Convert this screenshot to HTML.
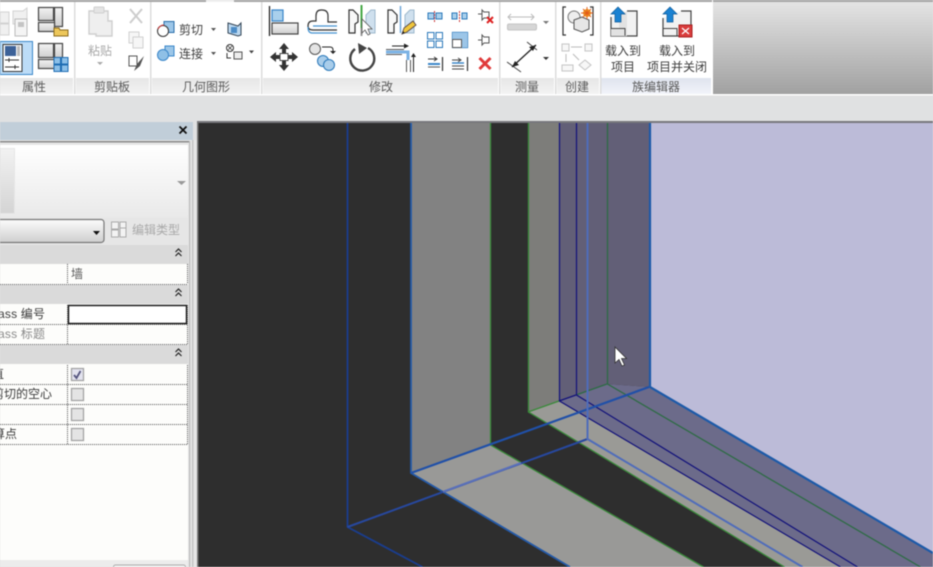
<!DOCTYPE html>
<html lang="zh"><head><meta charset="utf-8"><title>Revit</title>
<style>
html,body{margin:0;padding:0;width:933px;height:567px;overflow:hidden;background:#e0e1e2}
svg{display:block;filter:blur(.45px)}
text{font-family:"Liberation Sans","Noto Sans CJK SC",sans-serif;font-size:12px;fill:#3c3c3c}
.c{text-anchor:middle}
.g{fill:#5a5a5a}
.f{fill:#a9a9a9}
</style></head><body>
<svg width="933" height="567" viewBox="0 0 933 567" xmlns="http://www.w3.org/2000/svg">
<defs>
<linearGradient id="rg" x1="0" y1="0" x2="0" y2="1"><stop offset="0" stop-color="#e4e4e4"/><stop offset="1" stop-color="#a0a0a0"/></linearGradient>
<linearGradient id="lb" x1="0" y1="0" x2="0" y2="1"><stop offset="0" stop-color="#e6e6e6"/><stop offset="1" stop-color="#f3f3f3"/></linearGradient>
<linearGradient id="lb2" x1="0" y1="0" x2="0" y2="1"><stop offset="0" stop-color="#dfe4ee"/><stop offset="1" stop-color="#f2f4fa"/></linearGradient>
<linearGradient id="ts" x1="0" y1="0" x2="0" y2="1"><stop offset="0" stop-color="#fff"/><stop offset="1" stop-color="#e9e9e9"/></linearGradient>
<linearGradient id="dd" x1="0" y1="0" x2="0" y2="1"><stop offset="0" stop-color="#fbfbfb"/><stop offset="1" stop-color="#cfcfcf"/></linearGradient>
<linearGradient id="pv" x1="0" y1="0" x2="0" y2="1"><stop offset="0" stop-color="#f2f2f2"/><stop offset="1" stop-color="#d4d4d4"/></linearGradient>
<linearGradient id="ic" x1="0" y1="0" x2="0" y2="1"><stop offset="0" stop-color="#f4f4f4"/><stop offset="1" stop-color="#cfcfcf"/></linearGradient>
</defs>

<!-- base -->
<rect width="933" height="567" fill="#e0e1e2"/>
<!-- ribbon -->
<rect x="0" y="0" width="712" height="95" fill="#fff"/>
<rect x="712" y="2" width="221" height="93" fill="url(#rg)"/>
<rect x="0" y="0" width="933" height="2" fill="#a5a5a5"/>
<rect x="206" y="0" width="28" height="2" fill="#f0f0f0"/>
<rect x="712" y="0" width="1" height="95" fill="#fff"/>
<rect x="0" y="94" width="933" height="1.5" fill="#fff"/>
<!-- group label bands -->
<g fill="url(#lb)">
<rect x="0" y="78" width="73" height="16"/><rect x="76" y="78" width="73" height="16"/><rect x="152" y="78" width="108" height="16"/><rect x="263" y="78" width="235" height="16"/><rect x="501" y="78" width="53" height="16"/><rect x="557" y="78" width="42" height="16"/>
</g>
<rect x="601" y="78" width="110" height="16" fill="url(#lb2)"/>
<g fill="#dcdcdc">
<rect x="74" y="2" width="1.5" height="92"/><rect x="150" y="2" width="1.5" height="92"/><rect x="261" y="2" width="1.5" height="92"/><rect x="499" y="2" width="1.5" height="92"/><rect x="555" y="2" width="1.5" height="92"/><rect x="600" y="2" width="1.5" height="92"/>
</g>
<g class="lab">
<text class="c g" x="34" y="91">属性</text>
<text class="c g" x="112" y="91">剪贴板</text>
<text class="c g" x="206" y="91">几何图形</text>
<text class="c g" x="381" y="91">修改</text>
<text class="c g" x="527" y="91">测量</text>
<text class="c g" x="577" y="91">创建</text>
<text class="c g" x="656" y="91">族编辑器</text>
</g>

<!-- cubes (faded) -->
<g fill="#f0f0f0" stroke="#d2d2d2">
<path d="M0 12h9v11H0z M0 24h9v11H0z"/>
<path d="M13 11h10l4 -3v13l-4 3H13z"/>
<rect x="15" y="19" width="12" height="17" fill="#f4f4f4" stroke="#bbb"/>
</g>
<rect x="18" y="22" width="6" height="5" fill="#c4c4c4"/>
<!-- type props -->
<g stroke="#444" stroke-width="1.2" fill="url(#ic)">
<rect x="38.5" y="7.5" width="15" height="13"/>
<rect x="54.5" y="7.5" width="8" height="19"/>
<rect x="38.5" y="22.5" width="16" height="9"/>
</g>
<path d="M54 28h5l1 2h8v6H54z" fill="#edc75a" stroke="#8b6a1c"/>
<!-- properties button -->
<rect x="0" y="41.5" width="32.5" height="33" fill="#bcdcf7" stroke="#3b87c9"/>
<rect x="3" y="44.5" width="19" height="27" fill="#fff" stroke="#333"/>
<rect x="5" y="46" width="11" height="10" fill="#3c6198"/>
<rect x="17" y="46" width="3" height="10" fill="#bbb"/>
<path d="M5 60h14M5 67h14M9 58v4M15 65v4" stroke="#333" fill="none"/>
<!-- family types -->
<g stroke="#444" stroke-width="1.2" fill="url(#ic)">
<rect x="38.5" y="43.5" width="15" height="14"/>
<rect x="54.5" y="43.5" width="8" height="14"/>
<rect x="38.5" y="59.5" width="16" height="9"/>
</g>
<g fill="#8cc0e8" stroke="#1f6db3">
<rect x="54" y="57.5" width="6.5" height="6.5"/><rect x="61.5" y="57.5" width="6.5" height="6.5"/><rect x="54" y="65" width="6.5" height="6.5"/><rect x="61.5" y="65" width="6.5" height="6.5"/>
</g>

<!-- clipboard (faded) -->
<path d="M89 11h19v10h4v15H96v-2h-7z" fill="#efefef" stroke="#cfcfcf" stroke-width="1.4"/>
<rect x="94" y="7" width="10" height="6" rx="1" fill="#e4e4e4" stroke="#cfcfcf"/>
<text class="c f" x="100" y="55">粘贴</text>
<path d="M97 62h6l-3 3z" fill="#a9a9a9"/>
<path d="M130 9l12 14M142 9l-12 14" stroke="#cdcdcd" stroke-width="2"/>
<rect x="129" y="32" width="10" height="11" fill="#f6f6f6" stroke="#d0d0d0"/>
<rect x="133" y="37" width="10" height="11" fill="#f6f6f6" stroke="#d0d0d0"/>
<rect x="129" y="56" width="8" height="10" fill="#fff" stroke="#555"/>
<path d="M134 71l3-7 7-8-4 10z" fill="#555"/>

<!-- geometry -->
<rect x="164" y="21.5" width="10" height="11" fill="#9cc6e8" stroke="#2a6eaa"/>
<circle cx="163" cy="31" r="5.5" fill="#fff" stroke="#333"/>
<path d="M158 29q2-4 6-4" stroke="#c33" fill="none"/>
<text x="179" y="34">剪切</text>
<path d="M211 28h5l-2.500 3z" fill="#555"/>
<path d="M228 23l10 3 3-3v12l-3 1-10-3z" fill="#bcd8f0" stroke="#345"/>
<rect x="231" y="27" width="6" height="6" fill="#4d8cc6"/>
<rect x="165" y="46" width="9" height="10" fill="#9cc6e8" stroke="#3a86c9"/>
<circle cx="163" cy="55" r="5.500" fill="#8fc0e6" stroke="#3a86c9"/>
<text x="179" y="58">连接</text>
<path d="M211 52h5l-2.500 3z" fill="#555"/>
<circle cx="230" cy="48" r="3.500" fill="#fff" stroke="#333"/>
<path d="M228 46l4 4M232 46l-4 4" stroke="#333" stroke-width=".8"/>
<path d="M227 53v5h4" stroke="#333" fill="none"/>
<rect x="234" y="52" width="8" height="7" fill="#eee" stroke="#555"/>
<path d="M249 50.500h5l-2.500 3z" fill="#444"/>

<!-- align -->
<path d="M269.500 6v30" stroke="#222" stroke-width="1.300"/>
<rect x="272" y="10" width="11" height="11" fill="#a9d0ec" stroke="#3a86c9" stroke-width="1.200"/>
<rect x="272" y="23" width="26" height="11" fill="url(#ic)" stroke="#444" stroke-width="1.200"/>
<!-- offset -->
<path d="M337 22h-9v-6q0-6-6-6h-1q-5 0-5 6v5h-3q-5 0-5 5q0 4 5 4h24" fill="none" stroke="#333" stroke-width="1.200"/>
<path d="M337 33h-25q-4 0-4-6M337 26h-24" fill="none" stroke="#4593d0" stroke-width="1.200"/>
<!-- mirror pick -->
<path d="M349 10h4l5 5v7l-3 2v9h-6z" fill="#f8f8f8" stroke="#333" stroke-width="1.200"/>
<path d="M375 10h-4l-5 5v18h9z" fill="#cfe0ee" stroke="#9db8cc"/>
<path d="M361.500 5v23" stroke="#46a846" stroke-width="2"/>
<path d="M361.500 28v8" stroke="#999" stroke-width="2"/>
<path d="M362 19v14l3-3 3 5 2-1-2-5h4z" fill="#fff" stroke="#555" stroke-width=".8"/>
<!-- mirror draw -->
<path d="M388 10h4l5 5v7l-3 2v9h-6z" fill="#f8f8f8" stroke="#333" stroke-width="1.200"/>
<path d="M414 10h-4l-5 5v18h9z" fill="#cfe0ee" stroke="#9db8cc"/>
<path d="M400.500 6v27" stroke="#6ea6d8" stroke-width="1.500"/>
<path d="M402 34l2-6 9-7 3 4-9 7z" fill="#f0c63c" stroke="#544" stroke-width=".9"/>
<path d="M402 34l1-3 2 2z" fill="#222"/>
<!-- small modify tools -->
<g fill="#a9d0ec" stroke="#2a78ba">
<rect x="428" y="13" width="6" height="6"/><rect x="436" y="13" width="6" height="6"/>
<rect x="452" y="13" width="5" height="6"/><rect x="462" y="13" width="5" height="6"/>
<rect x="427.500" y="32.500" width="6.500" height="6.500" fill="#fff"/><rect x="436" y="32.500" width="6.500" height="6.500" fill="#fff"/><rect x="427.500" y="41" width="6.500" height="6.500" fill="#fff"/><rect x="436" y="41" width="6.500" height="6.500" fill="#fff"/>
</g>
<path d="M434.500 11v11M459.500 11v11" stroke="#c33" stroke-dasharray="2 1"/>
<path d="M452.500 32.500h15v15h-15z" fill="#fff" stroke="#2a78ba" stroke-width="1.200"/>
<path d="M452.500 32.500h15v15h-6v-8h-9z" fill="#9cc6e8"/>
<rect x="452.500" y="39.500" width="9" height="8" fill="#fff" stroke="#555"/>
<path d="M478 14h4M482 10l2 2h5v6h-5l-2 2z" fill="#fff" stroke="#555"/>
<path d="M487 17l6 6M493 17l-6 6" stroke="#d22" stroke-width="2"/>
<path d="M478 40h4M482 35l2 2h5v6h-5l-2 2z" fill="#fff" stroke="#555"/>
<path d="M428 59h9M434 57l3 2-3 2" fill="none" stroke="#333"/>
<path d="M428 64h12" stroke="#3a86c9" stroke-width="2"/>
<path d="M428 67h12" stroke="#555"/>
<path d="M442.500 57v14" stroke="#333" stroke-width="1.200"/>
<path d="M452 60h8M458 58l3 2-3 2M452 63h12M452 66h12M452 69h12" fill="none" stroke="#444"/>
<path d="M452 63h12" stroke="#3a86c9" stroke-width="1.500"/>
<path d="M467.500 57v14" stroke="#333" stroke-width="1.200"/>
<path d="M479.500 58l11 11M490.500 58l-11 11" stroke="#e03a3a" stroke-width="3"/>
<!-- move -->
<path d="M284 43l5 6h-3v5h-4v-5h-3z M284 71l5-6h-3v-5h-4v5h-3z M270 57l6-5v3h4v4h-4v3z M298 57l-6-5v3h-4v4h4v3z" fill="#333"/>
<rect x="280" y="53.500" width="8" height="7" fill="#fff" stroke="#444"/>
<!-- copy -->
<circle cx="315" cy="49" r="5.500" fill="#e4e4e4" stroke="#555"/>
<path d="M322 47h8q3 0 3 3v2" fill="none" stroke="#222"/>
<path d="M330 51h6l-3 3z" fill="#222"/>
<circle cx="323" cy="61" r="5.500" fill="#a9cdea" stroke="#2a78ba"/>
<circle cx="329" cy="65" r="5.500" fill="#a9cdea" stroke="#2a78ba"/>
<!-- rotate -->
<path d="M355 49a12 12 0 1 0 13-1" fill="none" stroke="#444" stroke-width="2.400"/>
<path d="M358 43l9 5-8 6z" fill="#444"/>
<!-- trim -->
<path d="M392 46h13" stroke="#222"/>
<path d="M404 43.500l5 2.500-5 2.500z" fill="#222"/>
<path d="M386 49.500h18M386 54.500h16" stroke="#555" fill="none"/>
<path d="M386 52h22v8" stroke="#7ab2e4" stroke-width="3" fill="none"/>
<path d="M406.500 60v12M410.500 60v12" stroke="#555" fill="none"/>
<path d="M413.500 72v-17" stroke="#222"/>
<path d="M411 57l2.500-4 2.500 4z" fill="#222"/>

<!-- measure -->
<path d="M508 17h26M511 14l-3 3 3 3M531 14l3 3-3 3" stroke="#bbb" fill="none"/>
<rect x="507.500" y="24" width="29" height="6" rx="1.500" fill="#d6d6d6" stroke="#c4c4c4"/>
<path d="M543 21h6l-3 3z" fill="#777"/>
<path d="M512 67l24-22" stroke="#222" stroke-width="1.300"/>
<path d="M507 62l14 10M527 42l10 8" stroke="#444" fill="none"/>
<path d="M512 67l7-2-4-4zM536 45l-7 2 4 4z" fill="#222"/>
<path d="M543 57h6l-3 3z" fill="#333"/>
<!-- create -->
<path d="M566 7h-3v28h3M590 7h3v28h-3" fill="none" stroke="#333" stroke-width="1.200"/>
<circle cx="574" cy="17" r="6" fill="#eee" stroke="#777"/>
<path d="M574 20l8-3 7 3v9l-7 3-8-3z" fill="#e6e6e6" stroke="#555"/>
<circle cx="587" cy="13" r="4" fill="#f0a020"/>
<path d="M587 7v12M581 13h12M583 9l8 8M591 9l-8 8" stroke="#e25a1a" stroke-width=".9"/>
<g fill="#f7f7f7" stroke="#c4c4c4">
<rect x="562" y="44" width="7" height="7"/><rect x="585" y="44" width="7" height="7"/><rect x="562" y="65" width="11" height="6"/><path d="M585 60l6 5-6 5-6-5z"/>
</g>
<path d="M571 47h11M566 54v8M573 54l6 6" stroke="#bbb" fill="none"/>
<!-- load -->
<path d="M611 17v19h26V11h-10" fill="#f2f2f2" stroke="#444" stroke-width="1.200"/>
<path d="M619 12h8v24h-16v-8h8z" fill="#e2e2e2"/>
<path d="M611 28.500h14v7" fill="none" stroke="#444"/>
<path d="M618 7l7 7h-4v8h-6v-8h-4z" fill="#1b82d2" stroke="#0d5a99" stroke-width=".7"/>
<text class="c" x="623" y="55">载入到</text>
<text class="c" x="623" y="71">项目</text>
<!-- load + close -->
<path d="M663 18v18h28V11h-10" fill="#f2f2f2" stroke="#444" stroke-width="1.200"/>
<path d="M663 28.500h14v7" fill="none" stroke="#444"/>
<path d="M670 7l7 7h-4v8h-6v-8h-4z" fill="#1b82d2" stroke="#0d5a99" stroke-width=".7"/>
<rect x="679" y="25" width="13" height="12" fill="#d93c3c" stroke="#a82020"/>
<path d="M682 28l7 6M689 28l-7 6" stroke="#fff" stroke-width="1.200"/>
<text class="c" x="677" y="55">载入到</text>
<text class="c" x="677" y="71">项目并关闭</text>

<!-- band & viewport -->
<rect x="197" y="121" width="736" height="2" fill="#77777c"/>
<rect x="198" y="123" width="735" height="444" fill="#2e2e2e"/>
<rect x="197" y="122" width="1.500" height="445" fill="#777"/>

<!-- scene -->
<polygon points="650,123 933,123 933,553 650,387" fill="#bcbbd8"/>
<polygon points="411,123 490,123 490,445 411,473" fill="#828282"/>
<polygon points="528,123 559,123 559,401 528,412" fill="#7d7d7a"/>
<polygon points="559,123 650,123 650,387 607,384 576,395 559,401" fill="#625f77"/>
<polygon points="411,473 490,445 703,567 570,567" fill="#999997"/>
<polygon points="528,412 559,401 840,567 785,567" fill="#9a9a96"/>
<polygon points="559,401 607,384 650,387 933,553 933,567 840,567" fill="#6c6b8a"/>
<!-- green lines -->
<g stroke="#3a8a3a" stroke-width="1.300" fill="none">
<path d="M490.500 123v322l213 122"/>
<path d="M528.500 123v289l256 155"/>
<path d="M528 412l31-11"/>
<path d="M607.500 123v261l313 183" stroke="#2e6b45"/>
<path d="M576 395l31-11" stroke="#2e6b45"/>
</g>
<!-- navy -->
<g stroke="#12127a" stroke-width="1.200" fill="none">
<path d="M559.500 123v278l281 166"/>
<path d="M576.500 123v272l281 172"/>
<path d="M559 401l17-6"/>
</g>
<!-- blue -->
<g fill="none" stroke="#234fa6" stroke-width="1.800">
<path d="M347.500 123v404l75 40" stroke="#1a3d8e"/>
<path d="M411 123v350l159 94" stroke="#2359a8"/>
<path d="M411 473l238-86" stroke="#2050a8" stroke-width="2.200"/>
<path d="M347.500 527l240-88" stroke="#27489e" stroke-width="2"/>
<path d="M587.500 123v316l215 128" stroke="#4f6cba" stroke-width="2"/>
<path d="M650 123v264l283 166" stroke="#1d5aa8" stroke-width="2.200"/>
</g>
<path d="M443 491.800L521 463" fill="none" stroke="#5a70ba" stroke-width="2"/>
<!-- cursor -->
<path d="M615 347v16l4-3.500 3 6.500 2.500-1-3-6.500h5z" fill="#fff" stroke="#333" stroke-width=".8"/>

<!-- properties panel -->
<rect x="0" y="122" width="193" height="18" fill="#c1ced9"/>
<path d="M179.500 126.500l7 7M186.500 126.500l-7 7" stroke="#111" stroke-width="1.800"/>
<rect x="0" y="140" width="197" height="427" fill="#e6e6e6"/>
<rect x="0" y="141" width="189" height="1.500" fill="#8a8a8a"/>
<rect x="189" y="141" width="1.300" height="426" fill="#bdbdbd"/>
<rect x="192" y="140" width="1.500" height="427" fill="#c4c4c4"/>
<rect x="0" y="145" width="188" height="73" fill="url(#ts)"/>
<rect x="0" y="148.500" width="14.500" height="65" fill="url(#pv)" stroke="#e6e6e6"/>
<path d="M177 181h9l-4.500 4z" fill="#999"/>
<rect x="-4" y="219.500" width="108" height="23" rx="3" fill="url(#dd)" stroke="#777" stroke-width="1.200"/>
<path d="M93 231h7l-3.500 4z" fill="#111"/>
<g fill="#f3f3f3" stroke="#aaa">
<rect x="111.500" y="222" width="7" height="7"/><rect x="111.500" y="230" width="7" height="7"/><rect x="120" y="222" width="6" height="6"/><rect x="120" y="228" width="6" height="9"/>
</g>
<text x="132" y="234" class="f">编辑类型</text>
<!-- table -->
<rect x="0" y="245" width="188" height="315" fill="#fdfdfb"/>
<g fill="#dadada">
<rect x="0" y="245" width="188" height="19"/><rect x="0" y="285" width="188" height="19"/><rect x="0" y="345" width="188" height="19"/>
</g>
<rect x="0" y="560" width="188" height="7" fill="#ececec"/>
<rect x="113.500" y="565" width="72" height="6" rx="2" fill="#f4f4f4" stroke="#aaa"/>
<g fill="none" stroke="#222" stroke-width="1.200">
<path d="M175.500 252l3-3 3 3M175.500 256l3-3 3 3"/>
<path d="M175.500 292l3-3 3 3M175.500 296l3-3 3 3"/>
<path d="M175.500 352l3-3 3 3M175.500 356l3-3 3 3"/>
</g>
<g stroke="#555" stroke-dasharray="1 1" fill="none">
<path d="M0 284.500h188M0 324.500h188M0 344.500h188M0 384.500h188M0 404.500h188M0 424.500h188M0 444.500h188"/>
<path d="M67.500 264v20M67.500 305v40M67.500 365v80M187.500 264v20M187.500 305v40M187.500 365v80"/>
</g>
<rect x="68.500" y="305.500" width="118" height="18" fill="#fff" stroke="#111" stroke-width="1.400"/>
<text x="71" y="278" class="g">墙</text>
<text x="-2" y="318" textLength="47">ass 编号</text>
<text x="-2" y="338" textLength="47" style="fill:#8a8a8a">ass 标题</text>
<text x="-20" y="378">垂直</text>
<text x="-8" y="398">剪切的空心</text>
<text x="-7" y="438">算点</text>
<g fill="#e4e4e4" stroke="#a0a0a0" stroke-width="1.200">
<rect x="71.500" y="368.500" width="12" height="12" fill="#e2e2ee"/>
<rect x="71.500" y="388.500" width="12" height="12"/>
<rect x="71.500" y="408.500" width="12" height="12"/>
<rect x="71.500" y="428.500" width="12" height="12"/>
</g>
<path d="M74 375l2.500 3 4-7" fill="none" stroke="#55557f" stroke-width="1.800"/>
</svg>
</body></html>
